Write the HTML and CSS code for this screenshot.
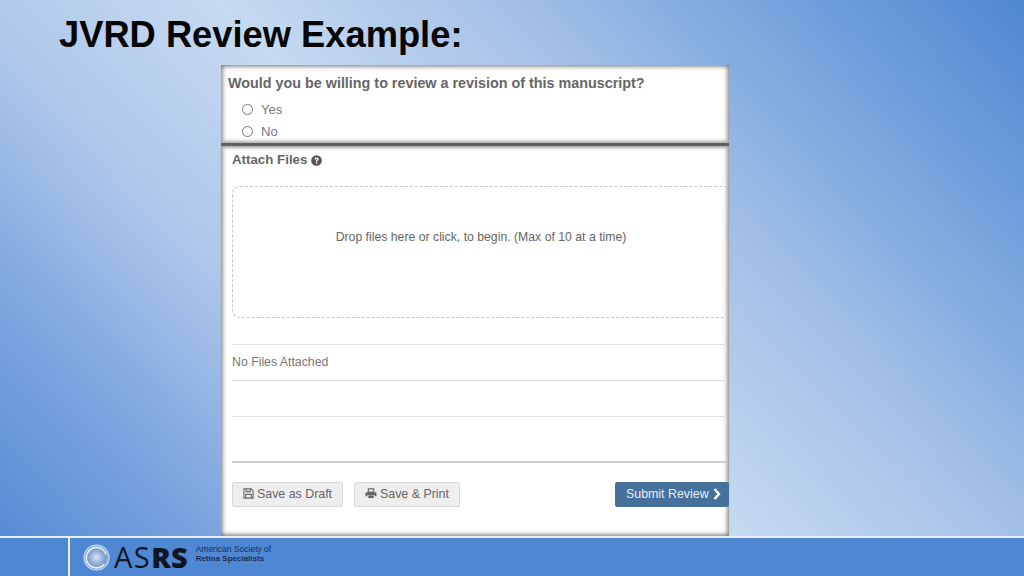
FILE: index.html
```html
<!DOCTYPE html>
<html lang="en">
<head>
  <meta charset="UTF-8" />
  <title>JVRD Review Example</title>
  <link rel="stylesheet" href="styles.css">
</head>
<body>
  <div class="slide">
    <h1 class="slide-title">JVRD Review Example:</h1>

    <div class="shot">
      <!-- Question card -->
      <div class="question">
        <h2>Would you be willing to review a revision of this manuscript?</h2>
        <label class="radio-row"><span class="radio"></span>Yes</label>
        <label class="radio-row"><span class="radio"></span>No</label>
      </div>

      <!-- Attachments card -->
      <div class="attach">
        <h3>Attach Files
          <svg class="help-icon" viewBox="0 0 12 12" width="11" height="11">
            <circle cx="6" cy="6" r="5.8" fill="#555" />
            <path d="M3.800 4.800c0-1.300 1-2 2.200-2s2.300.7 2.300 1.900c0 1.400-1.500 1.400-1.500 2.500H5.300c0-1.700 1.400-1.700 1.400-2.500 0-.4-.3-.6-.7-.6s-.7.3-.8.9z" fill="#fff" />
            <rect x="5.300" y="7.800" width="1.500" height="1.500" fill="#fff" />
          </svg>
        </h3>

        <div class="dropzone">Drop files here or click, to begin. (Max of 10 at a time)</div>

        <div class="file-row file-row-first">No Files Attached</div>
        <div class="file-row"></div>

        <div class="actions">
          <button class="btn">
            <svg viewBox="0 0 12 12" width="11" height="11" fill="none" stroke="#666" stroke-width="1.200">
              <path d="M1 1h8l2 2v8H1z" />
              <path d="M3.500 1v3h4.500V1M3 11V7h6v4" />
            </svg>
            Save as Draft
          </button>
          <button class="btn">
            <svg viewBox="0 0 12 12" width="12" height="11" fill="#666">
              <path d="M3 1h6v3.500H3z" fill="none" stroke="#666" stroke-width="1.200" />
              <path d="M1 4.500h10a1 1 0 0 1 1 1V9H10V7.500H2V9H0V5.500a1 1 0 0 1 1-1z" />
              <path d="M3 8h6v3H3z" />
            </svg>
            Save &amp; Print
          </button>
          <button class="btn btn-primary">
            Submit Review
            <svg viewBox="0 0 8 12" width="8" height="12" fill="none" stroke="#fff" stroke-width="2.400">
              <path d="M1.500 1l4.500 5-4.500 5" />
            </svg>
          </button>
        </div>
      </div>
    </div>

    <div class="footer">
      <div class="footer-rule"></div>
      <svg class="logo-mark" viewBox="0 0 28 28" width="27" height="27">
        <defs>
          <radialGradient id="logoCore">
            <stop offset="0" stop-color="#d5e2f3" />
            <stop offset="1" stop-color="#6f92c6" />
          </radialGradient>
        </defs>
        <circle cx="14" cy="14" r="13" fill="#8fadd8" stroke="#c9d8ec" stroke-width="1.200" />
        <circle cx="14" cy="14" r="10.500" fill="url(#logoCore)" />
        <path d="M22 21A10.500 10.500 0 1 1 24 11" fill="none" stroke="#eef3fa" stroke-width="1.500" />
      </svg>
      <span class="logo-as">AS</span><span class="logo-rs">RS</span>
      <div class="logo-text">
        <span>American Society of</span>
        <strong>Retina Specialists</strong>
      </div>
    </div>
  </div>
</body>
</html>
```

FILE: styles.css
```css
* {
  box-sizing: border-box;
}

body {
  margin: 0;
  font-family: "Liberation Sans", Arial, sans-serif;
}

.slide {
  width: 1024px;
  height: 576px;
  overflow: hidden;
  display: flex;
  flex-direction: column;
  background: linear-gradient(46deg, #4f87d3 0%, #7ea5df 17%, #afc8ea 33%, #c6daf1 49%, #a8c3e8 65%, #7ea8df 81%, #4f87d2 100%);
}

.slide-title {
  margin: 0;
  height: 65px;
  padding: 15px 0 0 59px;
  font-size: 36.300px;
  line-height: 40px;
  font-weight: 700;
  color: #050505;
}

.shot {
  width: 508px;
  height: 471px;
  margin-left: 221px;
  background: #fff;
  color: #666;
  display: flex;
  flex-direction: column;
  box-shadow: inset 0 0 5px 1px #666;
}

.question {
  height: 78px;
  padding: 9px 7px 0;
  flex-shrink: 0;
}

.question h2 {
  margin: 0 0 6px;
  font-size: 14.350px;
  line-height: 18px;
  font-weight: 700;
  color: #666;
}

.radio-row {
  display: flex;
  align-items: center;
  gap: 8px;
  height: 22px;
  padding-left: 14px;
  font-size: 13px;
  color: #777;
}

.radio {
  width: 11px;
  height: 11px;
  border: 1px solid #777;
  border-radius: 50%;
  background: #fff;
}

.attach {
  flex: 1;
  padding: 5px 2px 0 11px;
  border-top: 3px solid #606060;
  box-shadow: 0 -3px 3px -1px #aaa, inset 0 3px 3px -1px #aaa;
}

.attach h3 {
  margin: 0;
  height: 26px;
  font-size: 13.300px;
  line-height: 18px;
  font-weight: 700;
  color: #666;
  display: flex;
  align-items: center;
  gap: 4px;
  padding-bottom: 8px;
}

.dropzone {
  height: 132px;
  margin: 9px -1px 0 0;
  border: 1px dashed #c4c4c4;
  border-right: 0;
  border-radius: 8px 0 0 8px;
  display: flex;
  align-items: center;
  justify-content: center;
  padding-bottom: 30px;
  padding-left: 1px;
  font-size: 12.250px;
  color: #666;
}

.file-row {
  height: 36px;
  border-bottom: 1px solid #ddd;
  font-size: 12.300px;
  line-height: 34px;
  color: #777;
}

.file-row-first {
  height: 37px;
  margin-top: 26px;
  border-top: 1px solid #ddd;
}

.actions {
  display: flex;
  align-items: flex-start;
  gap: 11px;
  margin-top: 44px;
  padding-top: 19px;
  border-top: 2px solid #ccc;
}

.btn {
  height: 25px;
  width: 111px;
  padding: 0 0 2px 10px;
  display: flex;
  align-items: center;
  gap: 3px;
  font-family: inherit;
  font-size: 12.400px;
  color: #666;
  background: #eee;
  border: 1px solid #d8d8d8;
  border-radius: 2px;
}

.btn + .btn {
  width: 106px;
}

.btn.btn-primary {
  width: 114px;
  margin-left: auto;
  margin-right: -2px;
  padding: 0 0 2px 10px;
  color: #e6eef6;
  background: #46719c;
  border-color: #46719c;
  gap: 4px;
}

.footer {
  margin-top: auto;
  height: 40px;
  background: #4f87d3;
  border-top: 2px solid #e8f0fa;
  display: flex;
  align-items: center;
  padding-left: 68px;
  color: #10161f;
}

.footer-rule {
  width: 2px;
  height: 38px;
  background: #e8f0fa;
  margin-right: 13px;
}

.logo-mark {
  margin-right: 4px;
}

.logo-as {
  font-family: "Open Sans", sans-serif;
  font-size: 29px;
  font-weight: 400;
  line-height: 34px;
  letter-spacing: 1.500px;
}

.logo-rs {
  font-family: "Open Sans", sans-serif;
  font-size: 29px;
  font-weight: 800;
  line-height: 34px;
  margin-right: 8px;
}

.logo-text {
  display: flex;
  flex-direction: column;
  padding-bottom: 6px;
  font-size: 8.500px;
  line-height: 9px;
  color: #17305a;
}

.logo-text strong {
  font-size: 8px;
}
```
